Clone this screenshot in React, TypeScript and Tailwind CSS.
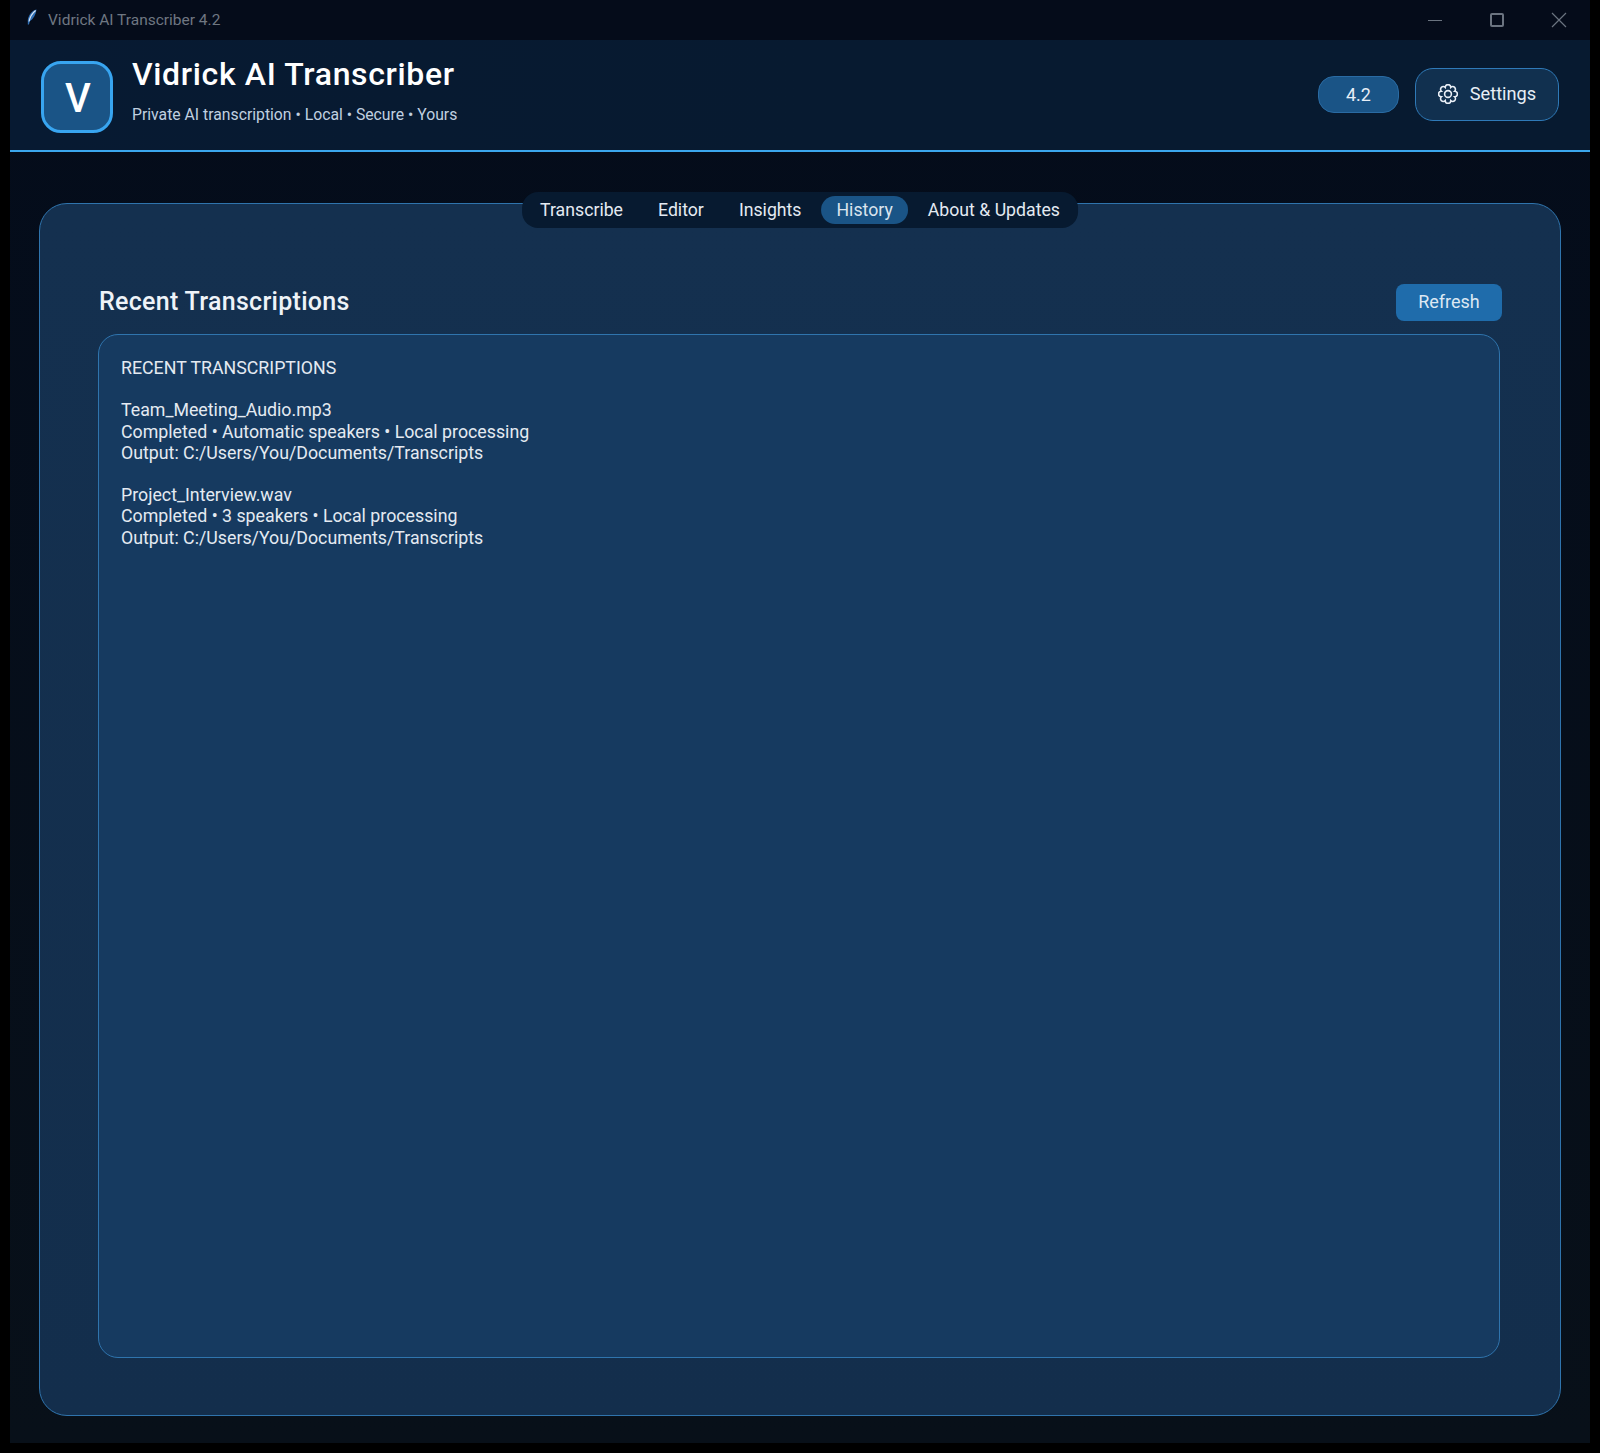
const font = { fontFamily: 'Roboto, "Liberation Sans", sans-serif' };

function gearPath() {
  const cx = 10;
  const cy = 10;
  const n = 8;
  const R = 7.2;
  let d = "";
  for (let i = 0; i < n; i++) {
    const a = ((i + 0.5) * 2 * Math.PI) / n - Math.PI / 2;
    const x = (cx + R * Math.cos(a)).toFixed(2);
    const y = (cy + R * Math.sin(a)).toFixed(2);
    d += i === 0 ? `M${x} ${y}` : ` A2.7 2.7 0 1 1 ${x} ${y}`;
  }
  const a0 = (0.5 * 2 * Math.PI) / n - Math.PI / 2;
  d += ` A2.7 2.7 0 1 1 ${(cx + R * Math.cos(a0)).toFixed(2)} ${(cy + R * Math.sin(a0)).toFixed(2)} Z`;
  return d;
}

function Gear() {
  return (
    <svg width="20" height="20" viewBox="0 0 20 20" fill="none" stroke="#e8eef6" strokeWidth="1.6">
      <circle cx="10" cy="10" r="3.4" />
      <path d={gearPath()} />
    </svg>
  );
}

function Quill() {
  return (
    <svg width="10" height="16" viewBox="0 0 10 16">
      <path d="M9.5 0.5 C5 1.5 1.5 6 0.8 11 L0.8 15.5 L2 15.5 L2.8 12.2 C6.5 10 8.8 5.5 9.5 0.5 Z" fill="#2f6fb5" />
      <path d="M8.6 1.5 C5.5 4 3 8 2 12.5" stroke="#dfe9f5" strokeWidth="1.1" fill="none" />
    </svg>
  );
}

const tabs = ["Transcribe", "Editor", "Insights", "History", "About & Updates"];

export default function App() {
  return (
    <div className="h-[1453px] w-full bg-black px-[10px] pb-[10px]" style={font}>
      <div className="flex h-full flex-col bg-gradient-to-b from-[#040c1b] to-[#081019]">
        <div className="flex h-[40px] shrink-0 items-center justify-between bg-[#050c1a] pl-[16px]">
          <div className="flex items-center gap-[10px]">
            <div className="-mt-[7px] flex w-[12px] justify-center"><Quill /></div>
            <span className="mt-[1px] text-[15.5px] text-[#6f7782]">Vidrick AI Transcriber 4.2</span>
          </div>
          <div className="flex items-center">
            <div className="flex w-[62px] justify-center">
              <div className="h-px w-[14px] bg-[#6b7480]" />
            </div>
            <div className="flex w-[62px] justify-center">
              <div className="h-[14px] w-[14px] rounded-[2px] border-2 border-[#6b7480]" />
            </div>
            <div className="flex w-[62px] justify-center">
              <svg width="16" height="16" viewBox="0 0 16 16" stroke="#6b7480" strokeWidth="1.2"><path d="M1 1 L15 15 M15 1 L1 15" /></svg>
            </div>
          </div>
        </div>

        <header className="flex h-[112px] shrink-0 items-center justify-between border-b-2 border-[#3ba7ee] bg-gradient-to-r from-[#071a32] via-[#071a30] to-[#071a30] pl-[31px] pr-[31px]">
          <div className="flex items-center gap-[19px]">
            <div className="mt-[4px] flex h-[72px] w-[72px] items-center justify-center rounded-[20px] border-[3px] border-[#38a5f0] bg-[#1a5486]">
              <span className="ml-[2px] pt-[4px] text-[40px] font-medium leading-none text-white">V</span>
            </div>
            <div className="-mt-[12px] flex flex-col">
              <h1 className="text-[32px] font-medium leading-[38px] tracking-[0.65px] text-white">Vidrick AI Transcriber</h1>
              <p className="mt-[12px] text-[15.75px] leading-[19px] text-[#c0d0e0]">Private AI transcription • Local • Secure • Yours</p>
            </div>
          </div>
          <div className="-mt-[2px] flex items-center gap-[16px]">
            <div className="flex h-[37px] w-[81px] items-center justify-center rounded-[16px] border border-[#2a6ba3] bg-[#1a5486] text-[18px] text-[#e8eef6]">4.2</div>
            <button className="flex h-[53px] w-[144px] items-center justify-center gap-[12px] rounded-[18px] border border-[#2f7ab8] bg-[#11304f] text-[18.2px] text-[#e8eef6]">
              <Gear />
              Settings
            </button>
          </div>
        </header>

        <main className="min-h-0 flex-1 px-[29px] pb-[27px] pt-[51px]">
          <section className="relative flex h-full flex-col rounded-[28px] border border-[#2f74ad] bg-gradient-to-b from-[#14304f] to-[#132e4c] pb-[57px] pl-[58px] pr-[60px] pt-[72px]">
            <nav className="absolute -top-[12px] left-1/2 flex h-[36px] -translate-x-1/2 items-center gap-[5px] rounded-[16px] bg-[#071a30] px-[3px]">
              {tabs.map((t) => (
                <span
                  key={t}
                  className={
                    t === "History"
                      ? "flex h-[28px] items-center rounded-[14px] bg-[#1a5486] px-[15px] text-[17.7px] text-[#dbe4ee]"
                      : "flex h-[28px] items-center rounded-[14px] px-[15px] text-[17.7px] text-[#e4eaf2]"
                  }
                >
                  {t}
                </span>
              ))}
            </nav>
            <div className="flex h-[52px] shrink-0 items-center justify-between">
              <h2 className="ml-[1px] text-[25px] font-medium tracking-[0.3px] text-[#eef3f8]">Recent Transcriptions</h2>
              <button className="-mr-[2px] flex h-[37px] w-[106px] items-center justify-center rounded-[8px] bg-[#1f6cab] pb-[1px] text-[18px] text-[#dce8f3]">Refresh</button>
            </div>
            <div className="mt-[6px] min-h-0 flex-1 rounded-[20px] border border-[#2f74ad] bg-[#163a60] px-[22px] py-[23px] text-[17.77px] leading-[21.2px] text-[#e4eaf2]">
              <p>RECENT TRANSCRIPTIONS</p>
              <p className="mt-[21.2px]">Team_Meeting_Audio.mp3</p>
              <p>Completed • Automatic speakers • Local processing</p>
              <p>Output: C:/Users/You/Documents/Transcripts</p>
              <p className="mt-[21.2px]">Project_Interview.wav</p>
              <p>Completed • 3 speakers • Local processing</p>
              <p>Output: C:/Users/You/Documents/Transcripts</p>
            </div>
          </section>
        </main>
      </div>
    </div>
  );
}
